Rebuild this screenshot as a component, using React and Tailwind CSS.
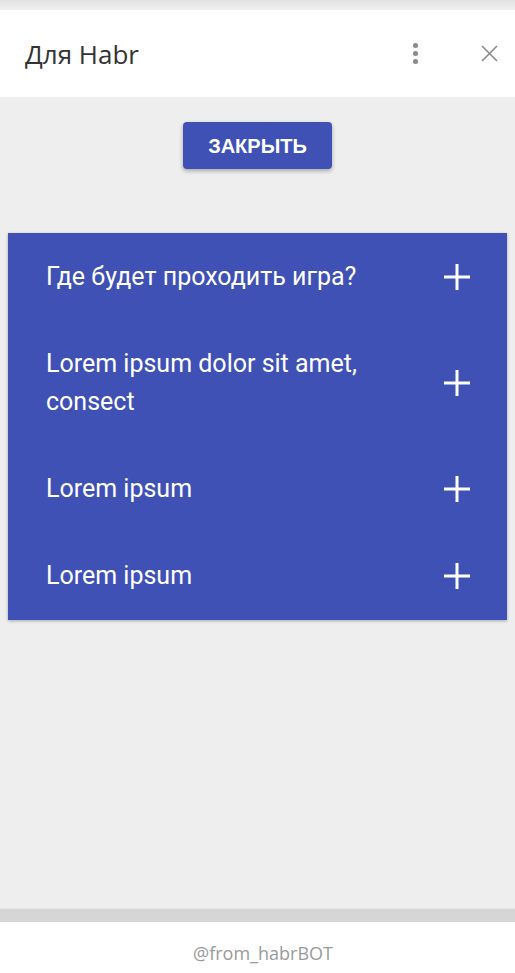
import React from 'react';

const items = [
    'Где будет проходить игра?',
    'Lorem ipsum dolor sit amet, consect',
    'Lorem ipsum',
    'Lorem ipsum',
];

const PlusIcon = () => (
    <svg width="26" height="26" viewBox="0 0 26 26" className="shrink-0">
        <path d="M13 0v26M0 13h26" stroke="#fff" strokeWidth="3" />
    </svg>
);

const App = () => {
    return (
        <div className="h-[973px] w-full flex flex-col bg-[#eeeeee] font-['Roboto',sans-serif] overflow-hidden">
            {/* top shadow strip */}
            <div className="h-[10px] bg-gradient-to-b from-[#e2e2e2] to-[#f0f0f0]" />

            {/* header */}
            <div className="h-[87px] bg-white flex items-center pl-[25px] pr-[17px]">
                <h1 className="flex-1 text-[26px] text-[#333333] font-['Open_Sans',sans-serif] leading-none">Для Habr</h1>
                <div className="flex flex-col gap-[3px] items-center mr-[63px]">
                    <span className="w-[5px] h-[5px] rounded-full bg-[#8a8a8a]" />
                    <span className="w-[5px] h-[5px] rounded-full bg-[#8a8a8a]" />
                    <span className="w-[5px] h-[5px] rounded-full bg-[#8a8a8a]" />
                </div>
                <svg width="17" height="17" viewBox="0 0 17 17">
                    <path d="M1 1l15 15M16 1L1 16" stroke="#8a8a8a" strokeWidth="1.6" />
                </svg>
            </div>

            {/* body */}
            <div className="flex-1 flex flex-col items-center pt-[25px]">
                <button className="w-[149px] h-[47px] rounded bg-[#3f51b5] text-white font-bold text-[20px] font-['Liberation_Sans',sans-serif] shadow-[0_2px_4px_rgba(0,0,0,0.3)]">
                    ЗАКРЫТЬ
                </button>

                <div className="self-stretch mx-2 mt-[64px] bg-[#3f51b5] shadow-[0_1px_3px_rgba(0,0,0,0.3)]">
                    {items.map((text, i) => (
                        <div key={i} className="flex items-center justify-between pl-[38px] pr-[37px] py-[24.6px]">
                            <span className="text-white text-[25px] leading-[38px] max-w-[340px]">{text}</span>
                            <PlusIcon />
                        </div>
                    ))}
                </div>
            </div>

            {/* bottom bar */}
            <div className="h-[14px] bg-[#d6d6d6] border-t border-[#e4e4e4]" />

            {/* footer */}
            <div className="h-[51px] bg-white flex items-center justify-center pt-[12px] pl-[11px]">
                <span className="text-[18px] text-[#9a9a9a] font-['Open_Sans',sans-serif]">@from_habrBOT</span>
            </div>
        </div>
    );
};

export default App;
